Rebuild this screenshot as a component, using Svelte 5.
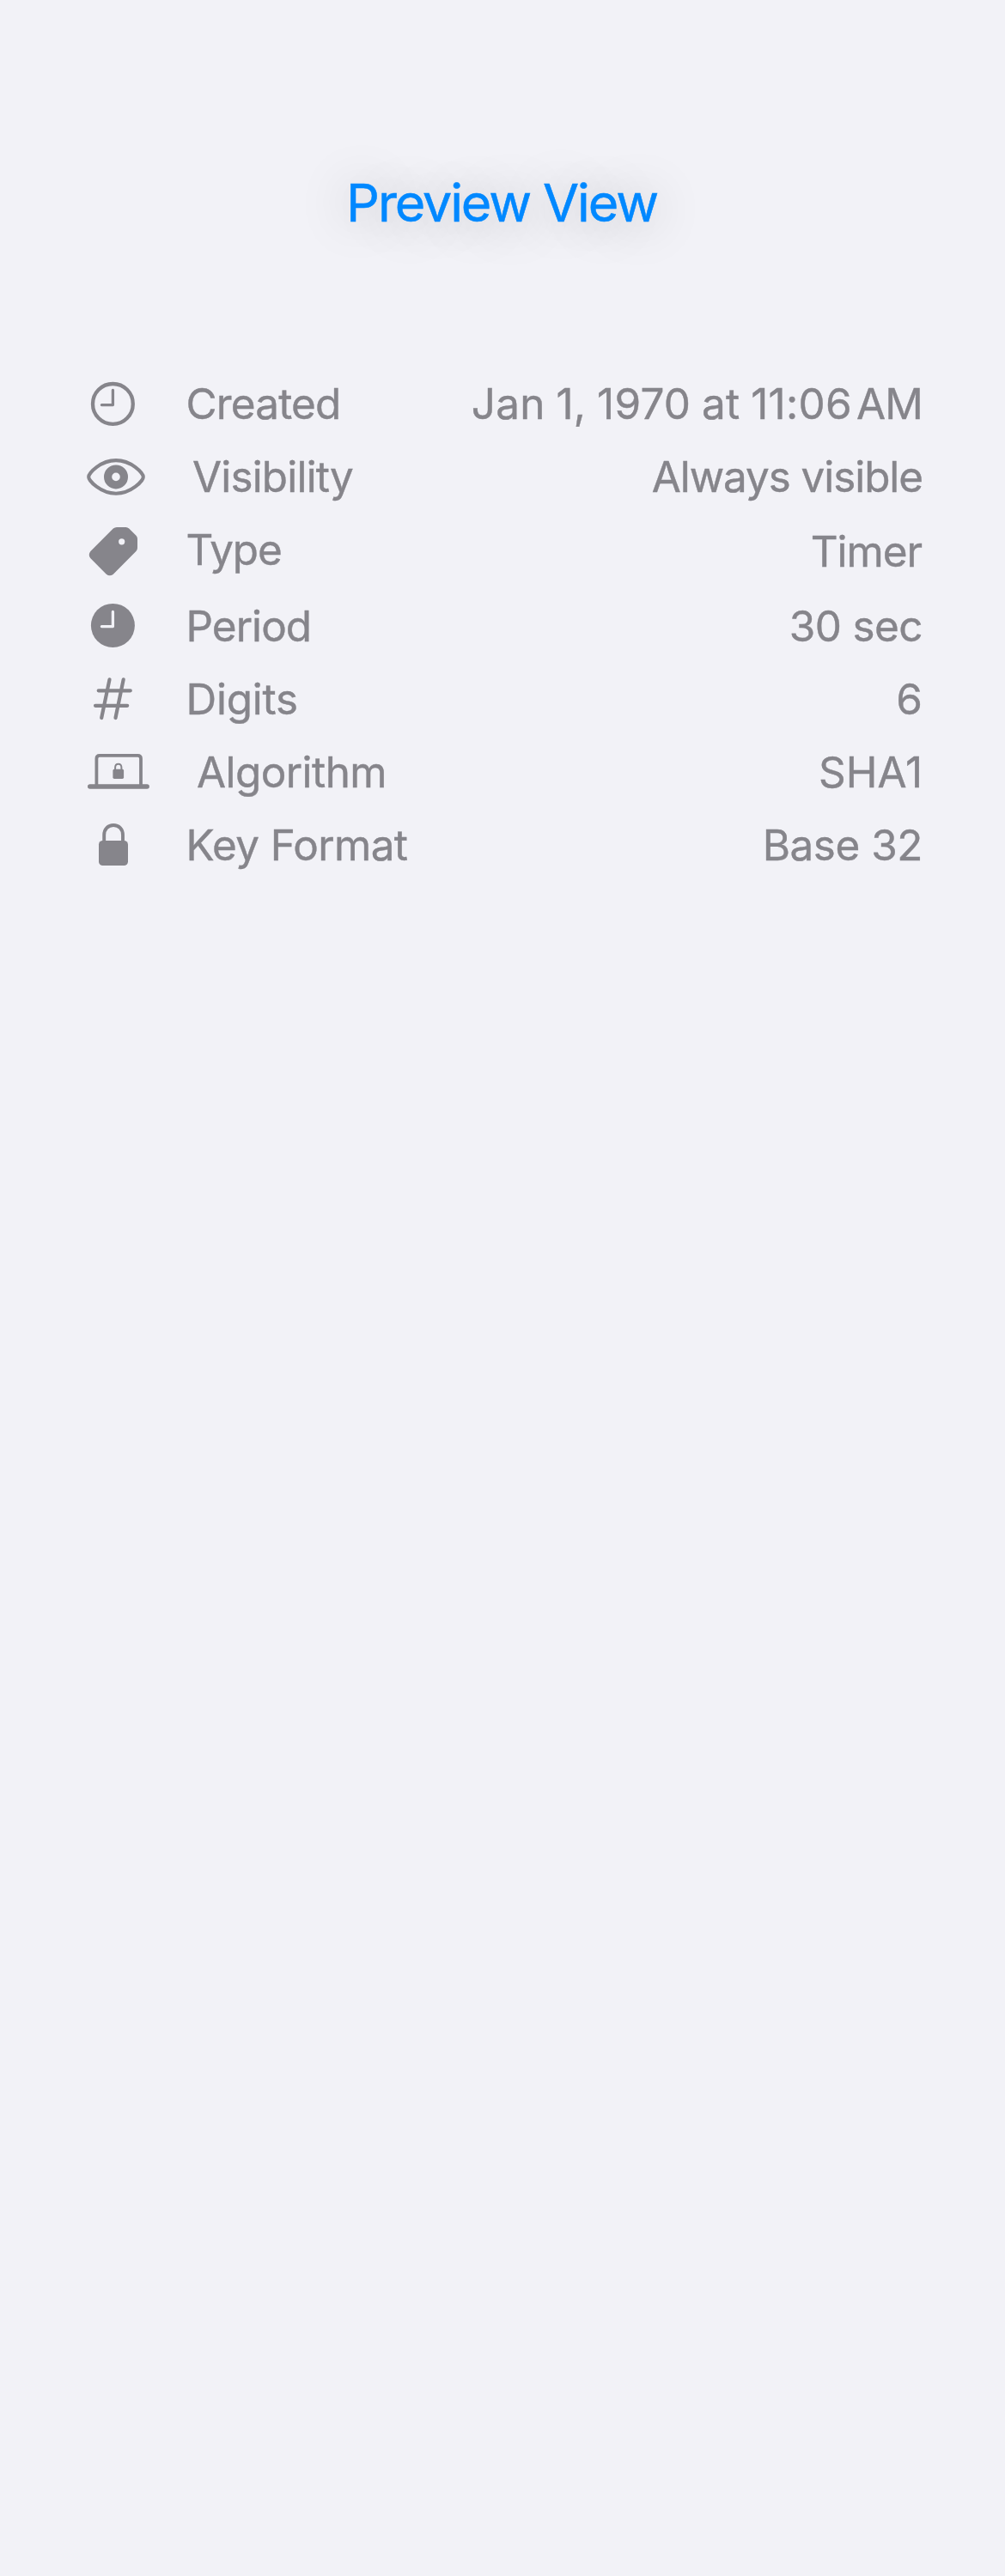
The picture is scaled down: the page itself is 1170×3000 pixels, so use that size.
<script>
  const rows = [
    { icon: 'clock', label: 'Created', value: 'Jan 1, 1970 at 11:06', suffix: 'AM', lt: -0.8, vt: 0.3 },
    { icon: 'eye', label: 'Visibility', value: 'Always visible', lt: -0.8, vt: -1.05 },
    { icon: 'tag', label: 'Type', value: 'Timer', lt: -1.1, vt: -1.05 },
    { icon: 'clock-fill', label: 'Period', value: '30 sec', lt: -0.94, vt: -0.56 },
    { icon: 'number', label: 'Digits', value: '6', lt: -0.2, vt: 0 },
    { icon: 'laptop', label: 'Algorithm', value: 'SHA1', lt: -0.54, vt: 0 },
    { icon: 'lock', label: 'Key Format', value: 'Base 32', lt: -0.62, vt: -0.45 }
  ];
</script>

<main>
  <h1>Preview View</h1>

  <div class="list">
    {#each rows as row}
      <div class="row {row.icon}">
        <svg class="icon" viewBox="0 0 80 85" width="80" height="85" aria-hidden="true">
          {#if row.icon === 'clock'}
            <circle class="line" cx="35.4" cy="42.4" r="23.4" stroke-width="4.3" />
            <path class="line" d="M35.4 26.5V43.6H22.4" stroke-width="3.3" />
          {:else if row.icon === 'eye'}
            <path class="line" stroke-width="4.1" d="M7.2 42.4C7.2 38 21 23.1 39 23.1S70.8 38 70.8 42.4S57 61.7 39 61.7S7.2 46.8 7.2 42.4Z" />
            <circle class="line" cx="39" cy="42.4" r="9.4" stroke-width="9.2" />
          {:else if row.icon === 'tag'}
            <path class="solid" fill-rule="evenodd" d="M35.8 17.5Q37.6 16 40 16H50.5Q52.6 16 54.2 17.5L62.5 25.8Q64 27.4 64 29.6V40Q64 42.6 62.4 44.1L35.6 70.9Q31.6 73.8 27.8 70.7L9.2 52Q6.2 48 9.4 43.9ZM45.7 29.2a3.6 3.6 0 1 0 0 7.2a3.6 3.6 0 1 0 0-7.2Z" />
          {:else if row.icon === 'clock-fill'}
            <circle class="solid" cx="35.4" cy="41.4" r="25.5" />
            <path class="line cut" d="M35.4 25.5V42.6H22.4" stroke-width="3.3" />
          {:else if row.icon === 'number'}
            <path class="line" stroke-width="4.2" d="M31.5 19.4L22.2 64M47.7 19.4L38.5 64M18.7 32.3H55.8M15 49.8H52.2" />
          {:else if row.icon === 'laptop'}
            <path class="line" stroke-width="5.6" d="M8.8 59H75.1" />
            <path class="line" stroke-width="3.8" d="M16.4 58V26.5Q16.4 22.9 20 22.9H64.4Q68 22.9 68 26.5V58" />
            <rect class="solid" x="35.4" y="38.8" width="12.7" height="11.1" rx="1.6" />
            <path class="line" stroke-width="2" d="M38.1 40V37Q38.1 32.7 41.8 32.7T45.4 37V40" />
          {:else}
            <rect class="solid" x="19" y="37" width="34" height="29" rx="4.6" />
            <path class="line" stroke-width="3.9" d="M25.2 38V30.5C25.2 23.5 29.8 19 36.1 19S47 23.5 47 30.5V38" />
          {/if}
        </svg>
        <span class="label" style:letter-spacing="{row.lt}px">{row.label}</span>
        <span class="value" style:letter-spacing="{row.vt}px">{row.value}{#if row.suffix}<span class="suffix">{row.suffix}</span>{/if}</span>
      </div>
    {/each}
  </div>
</main>

<style>
  :global(body) {
    background: #f2f2f7;
  }

  main {
    min-height: 3000px;
    box-sizing: border-box;
    padding: 176px 96px 0;
    font-family: Inter, 'Liberation Sans', sans-serif;
  }

  h1 {
    margin: 0 0 131px;
    padding-right: 2px;
    font-size: 61px;
    font-weight: 400;
    line-height: 121px;
    letter-spacing: -2.1px;
    text-align: center;
    color: #0088ff;
    -webkit-text-stroke: 0.5px #0088ff;
    text-shadow: 0 3px 60px rgba(0, 0, 0, 0.33);
  }

  .row {
    display: flex;
    align-items: flex-start;
    height: 85px;
    font-size: 49.4px;
    line-height: 84px;
    white-space: nowrap;
    color: #86858b;
    -webkit-text-stroke: 0.4px #86858b;
  }

  .tag {
    height: 89px;
  }

  .tag .value {
    padding: 2px 1px 0 0;
  }

  .icon {
    flex: none;
    margin-right: 40.5px;
  }

  .eye .icon {
    margin-right: 48px;
  }

  .laptop .icon {
    margin-right: 53px;
  }

  .value {
    margin-left: auto;
  }

  .clock .value {
    word-spacing: -1.5px;
  }

  .suffix {
    margin-left: 5px;
    letter-spacing: -0.8px;
  }

  .line {
    fill: none;
    stroke: #86858b;
    stroke-linecap: round;
    stroke-linejoin: round;
  }

  .cut {
    stroke: #f2f2f7;
  }

  .solid {
    fill: #86858b;
  }
</style>
